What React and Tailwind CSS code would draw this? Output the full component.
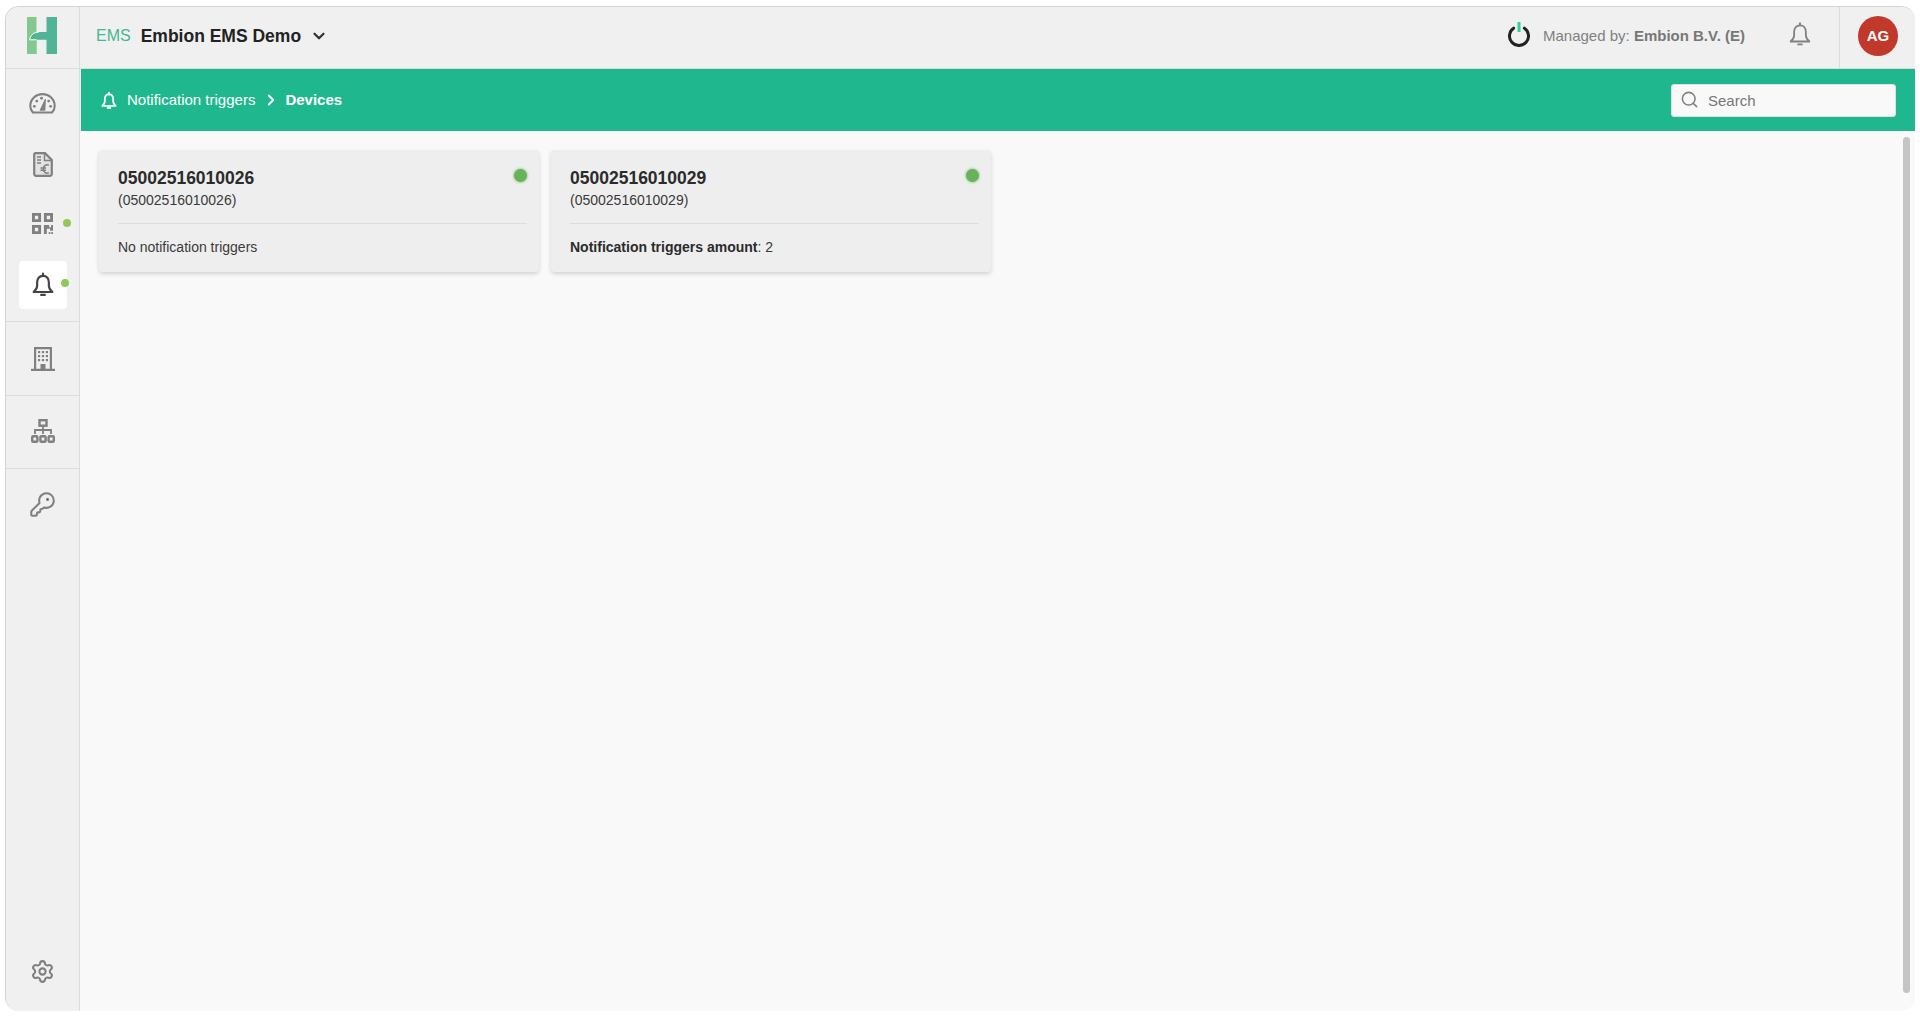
import React from "react";
import { ChevronDown, ChevronRight, KeyRound, Search, Settings } from "lucide-react";

const LogoIcon = () => (
  <svg width="30" height="37" viewBox="0 0 30 37">
    <rect x="0" y="0" width="9.5" height="37" fill="#83c98f" />
    <path d="M2.5 22.8C3.5 17.8 7 15 12 15H19.5V0H30V37H19.5V22.8Z" fill="#4fb596" />
    <path d="M2.5 22.8H9.5V37H0V0" fill="#83c98f" />
    <path d="M2.5 22.8C3.5 17.8 7 15 12 15" fill="none" stroke="#fff" strokeWidth="1" />
    <path d="M2.5 22.8H9.5" fill="none" stroke="#fff" strokeWidth="1" />
  </svg>
);

const GaugeIcon = () => (
  <svg width="27" height="21" viewBox="0 0 28 22" fill="none" stroke="#808080" strokeWidth="2.2">
    <path d="M4 20.5C2.2 18.5 1.2 16 1.2 13.5 1.2 6.5 7 1.2 14 1.2S26.8 6.5 26.8 13.5C26.8 16 25.8 18.5 24 20.5Z" />
    <path d="M11.5 18L17 6.5 16.5 18Z" fill="#808080" strokeWidth="1" />
    <g fill="#808080" stroke="none">
      <circle cx="5.5" cy="14" r="1.5" />
      <circle cx="8" cy="8.5" r="1.5" />
      <circle cx="13" cy="5.5" r="1.5" />
      <circle cx="22.5" cy="14" r="1.5" />
      <circle cx="20.5" cy="8.5" r="1.5" />
    </g>
  </svg>
);

const InvoiceIcon = () => (
  <svg width="20" height="25" viewBox="0 0 20 25" fill="none" className="mt-[2px]">
    <path d="M2.5 1.2H12L18.8 8V22A1.8 1.8 0 0 1 17 23.8H3A1.8 1.8 0 0 1 1.2 22V2.5A1.3 1.3 0 0 1 2.5 1.2Z" fill="#e2e2e2" stroke="#808080" strokeWidth="2.2" />
    <path d="M11.5 2V8.5H18" stroke="#808080" strokeWidth="1.4" />
    <path d="M4 5H8M4 8H8M4 11H8" stroke="#808080" strokeWidth="1.5" />
    <path d="M15.8 13.2C12.8 12 10.2 14 10.2 17S12.8 22 15.8 20.8M7.5 16H13M7.5 18.2H13" stroke="#808080" strokeWidth="1.5" />
  </svg>
);

const QrIcon = () => (
  <svg width="21" height="21" viewBox="0 0 22 22" fill="#808080">
    <path fillRule="evenodd" d="M0 0H9.5V9.5H0ZM3 3V6.5H6.5V3Z" />
    <path fillRule="evenodd" d="M12.5 0H22V9.5H12.5ZM15.5 3V6.5H19V3Z" />
    <path fillRule="evenodd" d="M0 12.5H9.5V22H0ZM3 15.5V19H6.5V15.5Z" />
    <path d="M12.5 12.5H18V15H20V12.5H22V18.5H19V16.5H15.5V22H12.5Z" />
    <rect x="17.5" y="20" width="1.8" height="2" />
    <rect x="20.2" y="20" width="1.8" height="2" />
  </svg>
);

const BuildingIcon = () => (
  <svg width="24" height="24" viewBox="0 0 24 24" fill="#808080">
    <path fillRule="evenodd" d="M3 0H21V21.8H24V24H0V21.8H3ZM5.2 2.2V21.8H9.5V17H14.5V21.8H18.8V2.2Z" />
    <rect x="7" y="4" width="2.2" height="2.2" />
    <rect x="10.9" y="4" width="2.2" height="2.2" />
    <rect x="14.8" y="4" width="2.2" height="2.2" />
    <rect x="7" y="8" width="2.2" height="2.2" />
    <rect x="10.9" y="8" width="2.2" height="2.2" />
    <rect x="14.8" y="8" width="2.2" height="2.2" />
    <rect x="7" y="12" width="2.2" height="2.2" />
    <rect x="10.9" y="12" width="2.2" height="2.2" />
    <rect x="14.8" y="12" width="2.2" height="2.2" />
  </svg>
);

const OrgIcon = () => (
  <svg width="24" height="24" viewBox="0 0 24 24" fill="none" stroke="#808080">
    <rect x="8.5" y="1.2" width="7" height="5.5" strokeWidth="2.4" />
    <path d="M12 7V15M4 15V11H20V15" strokeWidth="1.8" />
    <rect x="1.2" y="17.2" width="5.2" height="5.6" rx="1" strokeWidth="2.4" />
    <rect x="9.4" y="17.2" width="5.2" height="5.6" rx="1" strokeWidth="2.4" />
    <rect x="17.6" y="17.2" width="5.2" height="5.6" rx="1" strokeWidth="2.4" />
  </svg>
);

const PowerIcon = () => (
  <svg width="22" height="25" viewBox="0 0 22 25" fill="none">
    <path d="M5.6 6.2A9.5 9.5 0 1 0 16.4 6.2" stroke="#222" strokeWidth="3" strokeLinecap="round" />
    <path d="M11 0V10" stroke="#2fd09f" strokeWidth="3" />
  </svg>
);

const BellIcon = ({ width, height, color, stroke }) => (
  <svg width={width} height={height} viewBox="0 0 24 26" fill="none" stroke={color} strokeWidth={stroke} strokeLinejoin="round" strokeLinecap="round">
    <path d="M12 3.5C7.8 3.5 5.6 6.8 5.6 10.8V14.5C5.6 17 4 19 1.8 21.2H22.2C20 19 18.4 17 18.4 14.5V10.8C18.4 6.8 16.2 3.5 12 3.5Z" />
    <path d="M12 1.2V3.5" />
    <path d="M10 24.4H14" />
  </svg>
);

const SideItem = ({ children, dot }) => (
  <div className="relative flex h-[60px] items-center justify-center">
    {children}
    {dot && <span className="absolute right-[8px] top-[26px] h-[8px] w-[8px] rounded-full bg-[#8fc95a]" />}
  </div>
);

const DeviceCard = ({ id, children }) => (
  <div className="relative h-[122px] w-[440px] rounded-[4px] bg-[#eeeeee] pl-[19px] pr-[12.5px] pt-[18px] shadow-[0_2px_4px_rgba(0,0,0,0.16)]">
    <span className="absolute right-[12.5px] top-[19px] h-[13px] w-[13px] rounded-full bg-[#66b35a] shadow-[0_0_3px_#66b35a]" />
    <div className="text-[17.5px] font-bold leading-[20px] text-[#2b2b2b]">{id}</div>
    <div className="mt-[2px] text-[14px] leading-[20px] text-[#3a3a3a]">({id})</div>
    <div className="mt-[13px] border-t border-[#dddddd] pt-[13px] text-[14px] leading-[20px] text-[#3a3a3a]">{children}</div>
  </div>
);

export default function App() {
  return (
    <div className="h-[1016px] w-full bg-white pb-[5px] pl-[5px] pr-[5px] pt-[6px] font-['Liberation_Sans',Arial,sans-serif]">
      <div className="flex h-full overflow-hidden rounded-[14px] border-t border-l border-[#d4d4d4] bg-[#f9f9f9]">
        {/* Sidebar */}
        <aside className="flex w-[74px] shrink-0 flex-col border-r border-[#dcdcdc] bg-[#f0f0f0]">
          <div className="flex h-[62px] items-center justify-center border-b border-[#dcdcdc] pb-[4px] pr-[1px]">
            <LogoIcon />
          </div>
          <div className="h-[253px] border-b border-[#dcdcdc] pt-[4px]">
            <SideItem><GaugeIcon /></SideItem>
            <SideItem><InvoiceIcon /></SideItem>
            <SideItem dot><QrIcon /></SideItem>
            <div className="relative flex h-[60px] items-start justify-center pt-[8px]">
              <div className="flex h-[48px] w-[48px] items-center justify-center rounded-[4px] bg-white pb-[2px]">
                <BellIcon width={22} height={25} color="#444" stroke={2.4} />
              </div>
              <span className="absolute right-[10px] top-[26px] h-[8px] w-[8px] rounded-full bg-[#8fc95a]" />
            </div>
          </div>
          <div className="flex h-[74px] items-center justify-center border-b border-[#dcdcdc]">
            <BuildingIcon />
          </div>
          <div className="flex h-[73px] items-center justify-center border-b border-[#dcdcdc] pb-[2px]">
            <OrgIcon />
          </div>
          <div className="flex h-[74px] items-center justify-center pb-[3px]">
            <KeyRound size={27} strokeWidth={1.8} color="#808080" />
          </div>
          <div className="mt-auto flex h-[80px] items-center justify-center">
            <Settings size={25} strokeWidth={2} color="#808080" />
          </div>
        </aside>

        <div className="flex min-w-0 flex-1 flex-col">
          {/* Top bar */}
          <header className="flex h-[62px] shrink-0 items-center border-b border-[#dcdcdc] bg-[#f0f0f0]">
            <div className="flex h-full items-center pb-[3px]">
              <span className="ml-[16px] text-[16px] text-[#45b795]">EMS</span>
              <span className="ml-[10px] text-[17.5px] font-bold text-[#222]">Embion EMS Demo</span>
              <ChevronDown size={18} strokeWidth={3} color="#333" className="ml-[9px]" />
            </div>
            <div className="ml-auto flex h-full items-center">
              <div className="mb-[7px]">
                <PowerIcon />
              </div>
              <span className="ml-[13px] pb-[3px] text-[15px] text-[#808080]">
                Managed by: <b className="text-[#777]">Embion B.V. (E)</b>
              </span>
              <div className="mb-[7px] ml-[44px]">
                <BellIcon width={22} height={24} color="#808080" stroke={2} />
              </div>
              <div className="ml-[28px] flex h-full w-[76px] items-center justify-center border-l border-[#dcdcdc] pb-[3px] pl-[1px]">
                <div className="flex h-[40px] w-[40px] items-center justify-center rounded-full bg-[#c0392b] text-[15px] font-bold text-white">
                  AG
                </div>
              </div>
            </div>
          </header>

          {/* Breadcrumb bar */}
          <div className="ml-[1px] flex h-[62px] shrink-0 items-center bg-[#1fb78d] pl-[20px] pr-[19px] text-[15px] text-white">
            <BellIcon width={16} height={17} color="#fff" stroke={2.8} />
            <span className="ml-[10px]">Notification triggers</span>
            <ChevronRight size={18} strokeWidth={2.4} className="ml-[7px]" />
            <b className="ml-[5px]">Devices</b>
            <label className="ml-auto flex h-[33px] w-[225px] items-center rounded-[3px] border border-[#e0e0e0] bg-[#f9f9f9] pl-[8px]">
              <Search size={19} strokeWidth={2} color="#808080" className="mb-[2px]" />
              <span className="ml-[9px] pt-[2px] text-[15px] text-[#777]">Search</span>
            </label>
          </div>

          {/* Content */}
          <div className="flex min-h-0 flex-1">
            <main className="flex flex-1 items-start gap-[12px] pl-[19px] pt-[19px]">
              <DeviceCard id="05002516010026">No notification triggers</DeviceCard>
              <DeviceCard id="05002516010029">
                <b className="text-[#2b2b2b]">Notification triggers amount</b>: 2
              </DeviceCard>
            </main>
            <div className="mb-[18px] mr-[5px] mt-[6px] w-[7px] rounded-full bg-[#c4c4c4]" />
          </div>
        </div>
      </div>
    </div>
  );
}
